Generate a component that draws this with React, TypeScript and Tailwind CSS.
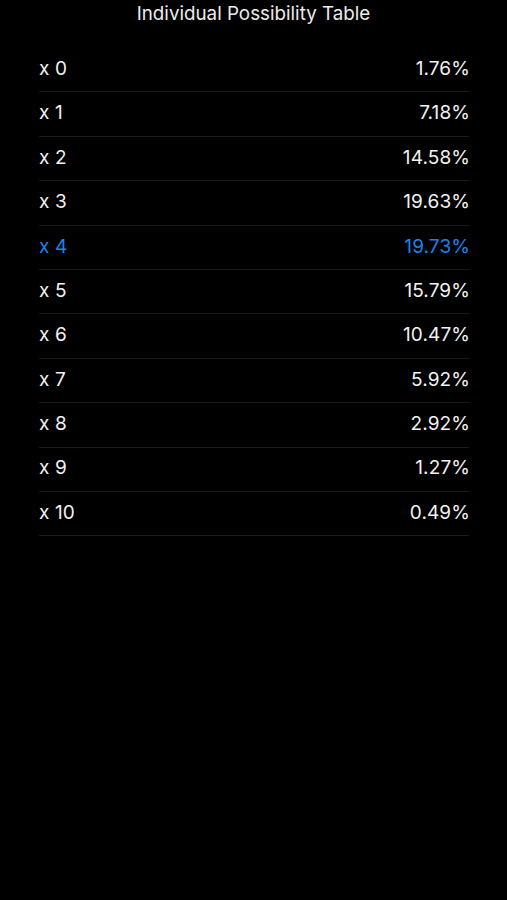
import React from "react";

const rows = [
  { n: 0, p: "1.76%" },
  { n: 1, p: "7.18%" },
  { n: 2, p: "14.58%" },
  { n: 3, p: "19.63%" },
  { n: 4, p: "19.73%" },
  { n: 5, p: "15.79%" },
  { n: 6, p: "10.47%" },
  { n: 7, p: "5.92%" },
  { n: 8, p: "2.92%" },
  { n: 9, p: "1.27%" },
  { n: 10, p: "0.49%" },
];

// highlight the most likely count
const maxIdx = 4;

export default function App() {
  return (
    <main
      className="min-h-[900px] w-full bg-black text-[#f2f2f2]"
      style={{ fontFamily: "Inter, 'Noto Sans', sans-serif" }}
    >
      <h1 className="text-center text-[18.8px] leading-[26px] pt-[1px] text-[#ececec]">
        Individual Possibility Table
      </h1>

      <div className="ml-[39px] mr-[38px] mt-[21px]">
        {rows.map((r, idx) => (
          <div
            key={r.n}
            className={`flex items-center justify-between h-[44.4px] pb-[1px] border-b border-[#1a1a1c] text-[19px] tracking-[0.1px] ${
              idx === maxIdx ? "text-[#1b83ef]" : "text-[#f2f2f2]"
            }`}
          >
            <span>x {r.n}</span>
            <span className="-mr-[1px]">{r.p}</span>
          </div>
        ))}
      </div>
    </main>
  );
}
